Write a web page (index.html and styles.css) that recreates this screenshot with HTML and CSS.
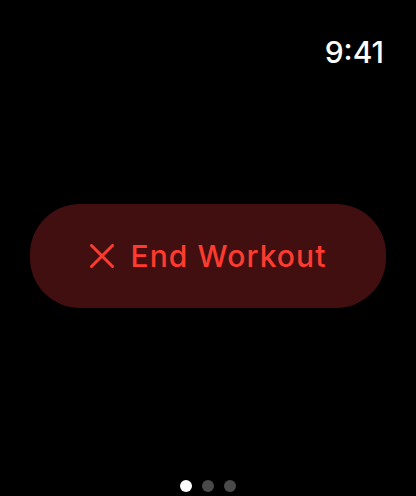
FILE: index.html
```html
<!DOCTYPE html>
<html lang="en">
<head>
    <meta charset="UTF-8">
    <meta name="viewport" content="width=device-width, initial-scale=1.0">
    <title>End Workout</title>
    <link rel="stylesheet" href="styles.css">
</head>
<body>
    <div class="screen">
        <div class="status-bar">
            <span class="time">9:41</span>
        </div>

        <div class="main">
            <button class="end-btn">
                <svg class="end-icon" viewBox="0 0 26 24" width="26" height="24">
                    <path d="M2.5 1.5 L23.5 22.5 M23.5 1.5 L2.5 22.5" stroke="currentColor" stroke-width="3" stroke-linecap="round" fill="none"/>
                </svg>
                <span class="end-label">End Workout</span>
            </button>
        </div>

        <div class="pager">
            <span class="dot active"></span>
            <span class="dot"></span>
            <span class="dot"></span>
        </div>
    </div>
</body>
</html>
```

FILE: styles.css
```css
* {
    box-sizing: border-box;
}

body {
    margin: 0;
    background: #000;
    font-family: Inter, "Noto Sans", sans-serif;
    color: #fff;
}

.screen {
    width: 416px;
    height: 496px;
    display: flex;
    flex-direction: column;
}

.status-bar {
    display: flex;
    justify-content: flex-end;
    padding: 34px 32px 0 0;
    height: 74px;
}

.time {
    font-size: 30px;
    font-weight: 500;
    line-height: 36px;
}

.main {
    flex: 1;
    display: flex;
    align-items: flex-start;
    padding: 130px 30px 0 30px;
}

.end-btn {
    width: 356px;
    height: 104px;
    border: none;
    border-radius: 50px;
    background: #410f0f;
    color: #ff3b30;
    display: flex;
    align-items: center;
    justify-content: center;
    gap: 15px;
    font-family: inherit;
    font-size: 30px;
    font-weight: 500;
    padding: 0;
    cursor: pointer;
}

.end-label {
    letter-spacing: 1.1px;
}

.end-icon {
    flex: none;
}

.pager {
    display: flex;
    justify-content: center;
    gap: 10px;
    height: 16px;
}

.dot {
    width: 12px;
    height: 12px;
    border-radius: 50%;
    background: #4a4a4a;
}

.dot.active {
    background: #fff;
}
```
